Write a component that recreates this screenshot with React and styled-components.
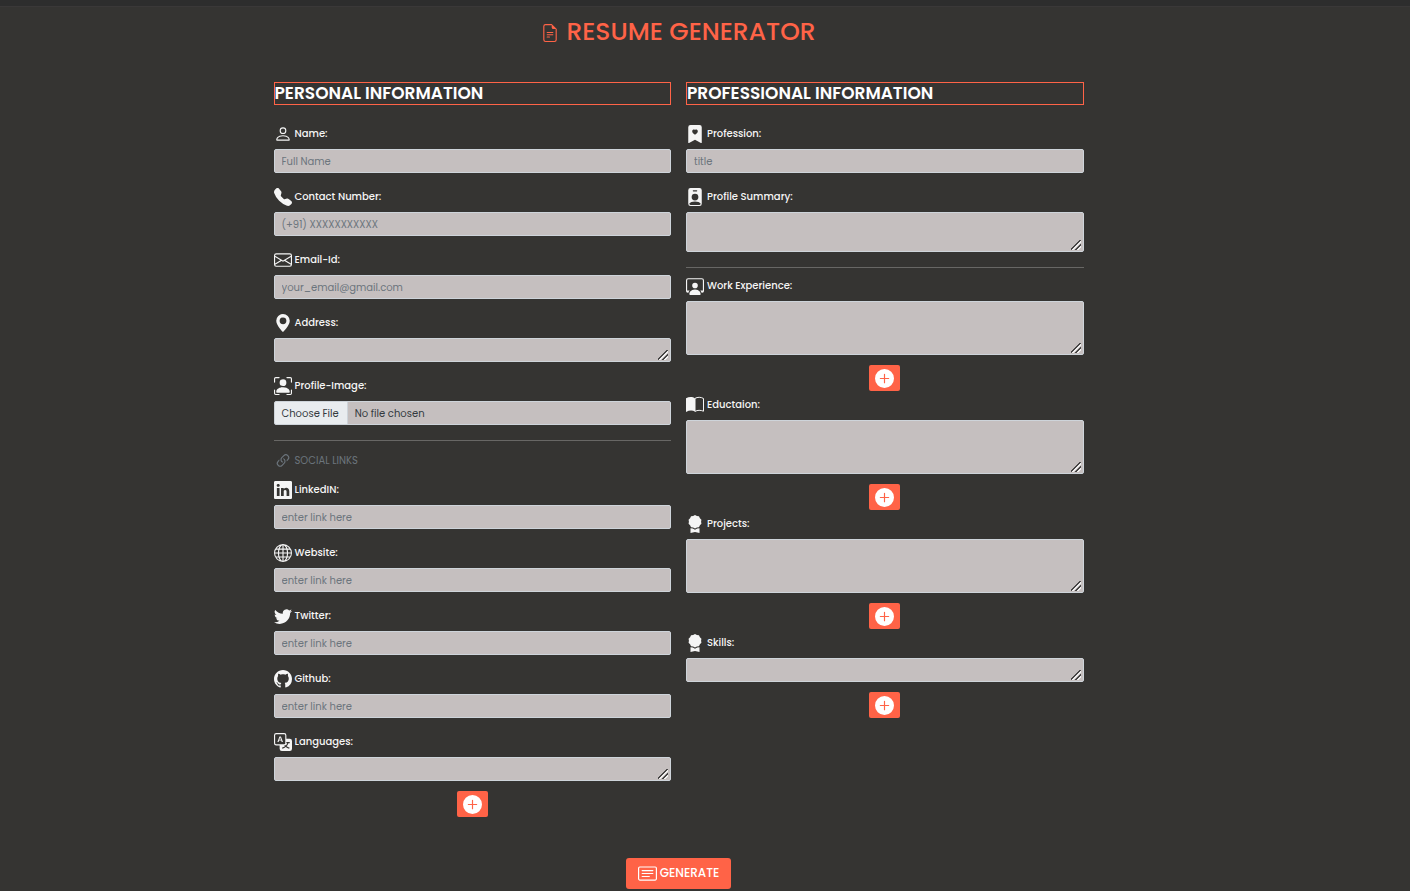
import React, { useId } from "react";
import styled, { createGlobalStyle, css } from "styled-components";
import {
  BsFileEarmarkText, BsPerson, BsTelephoneFill, BsEnvelope, BsGeoAltFill,
  BsPersonBoundingBox, BsLink45Deg, BsLinkedin, BsGlobe, BsTwitter, BsGithub,
  BsTranslate, BsBookmarkHeartFill, BsPersonBadgeFill,
  BsPersonWorkspace, BsAwardFill, BsPlusCircleFill, BsCardText,
} from "react-icons/bs";

const accent = "#ff6347";

const GlobalStyle = createGlobalStyle`
  *, *::before, *::after { box-sizing: border-box; }
  body {
    margin: 0;
    background: #353432;
    color: #f5f5f5;
    font-family: Poppins, Inter, sans-serif;
    font-size: 10px;
  }
`;

const TopBar = styled.div`
  height: 7px;
  background: #2d2d2d;
  border-bottom: 1px solid #3a3838;
`;

const Page = styled.main`
  display: flex;
  flex-direction: column;
  align-items: center;
  padding: 7px 53px 2px 0;
`;

const Title = styled.h1`
  display: flex;
  align-items: center;
  gap: 7px;
  margin: 0 0 32px;
  color: ${accent};
  font-size: 25px;
  font-weight: 500;
  line-height: 36px;
  svg { width: 18px; height: 18px; margin-top: 2px; }
`;

const Form = styled.form`
  width: 100%;
  max-width: 810px;
  display: flex;
  flex-direction: column;
  align-items: center;
  gap: 36px;
`;

const Columns = styled.div`
  width: 100%;
  display: grid;
  grid-template-columns: 1fr 1fr;
  gap: 15px;
`;

const Column = styled.section`
  display: flex;
  flex-direction: column;
`;

const Heading = styled.h2`
  margin: 0 0 20px;
  border: 1px solid ${accent};
  color: #fff;
  font-size: 17px;
  font-weight: 600;
  line-height: 21px;
`;

const Field = styled.div`
  display: flex;
  flex-direction: column;
  margin-bottom: ${(p) => (p.$repeat ? 5 : 15)}px;
`;

const lead = css`
  display: flex;
  align-items: flex-start;
  gap: 3px;
  height: 24px;
  line-height: 18px;
  svg { flex: none; width: 18px; height: 18px; }
`;

const Label = styled.label`
  ${lead}
  font-weight: 500;
`;

const SubHeading = styled.h3`
  ${lead}
  margin: 2px 0 5px;
  color: #6c757d;
  font-size: 10px;
  font-weight: 400;
`;

const control = css`
  display: block;
  width: 100%;
  margin: 0;
  border: 1px solid #ced4da;
  border-radius: 2px;
  background: #c5bfbf;
  color: #343a40;
  font: inherit;
  line-height: 16px;
`;

const TextInput = styled.input`
  ${control}
  height: 24px;
  padding: 4px 7px 2px;
  &::placeholder { color: #6c757d; opacity: 1; }
`;

const FileInput = styled.input`
  ${control}
  height: 24px;
  line-height: 22px;
  &::file-selector-button {
    height: 22px;
    margin: 0 7px 0 0;
    padding: 1px 8px 0 7px;
    border: 0;
    border-right: 1px solid #ced4da;
    background: #e9ecef;
    color: #343a40;
    font: inherit;
  }
`;

const TextArea = styled.textarea`
  ${control}
  height: ${(p) => p.$height}px;
  padding: 3px 7px;
  resize: vertical;

  &::-webkit-resizer {
    background: linear-gradient(
        135deg,
        transparent 42%, #484646 43% 52%, #f2f0f0 53% 60%,
        transparent 61% 69%, #484646 70% 79%, #f2f0f0 80% 87%, transparent 88%
      ) 3px 4px / 10px 10px no-repeat;
  }
`;

const Divider = styled.hr`
  width: 100%;
  height: 1px;
  margin: 0 0 9px;
  border: 0;
  background: #686765;
`;

const AddButton = styled.button`
  align-self: center;
  display: flex;
  align-items: center;
  justify-content: center;
  width: 31px;
  height: 26px;
  margin-top: 10px;
  padding: 0;
  border: 0;
  border-radius: 2px;
  background: ${accent};
  color: #fff;
  svg { width: 19px; height: 19px; }
`;

const GenerateButton = styled.button`
  display: flex;
  align-items: center;
  gap: 3px;
  height: 31px;
  padding: 0 12px 1px;
  border: 0;
  border-radius: 3px;
  background: ${accent};
  color: #fff;
  font: inherit;
  font-size: 12px;
  font-weight: 500;
  svg { width: 19px; height: 19px; }
`;

/* Open book, left page filled */
const BookIcon = () => (
  <svg viewBox="0 0 18 18" aria-hidden="true">
    <path fill="currentColor" d="M0 2.3C3 .7 6.6.7 9 2.4v13.2c-2.5-1.4-5.8-1.4-9 .4z" />
    <path fill="none" stroke="currentColor" d="M9 2.4C11.6.9 14.8.9 17.5 2.5v12.7c-3-1.2-6-1.2-8.5.2z" />
  </svg>
);

function Row({ icon: Icon, label, type = "text", placeholder, height, add }) {
  const id = useId();
  let input;
  if (height) input = <TextArea id={id} $height={height} />;
  else if (type === "file") input = <FileInput id={id} type="file" />;
  else input = <TextInput id={id} type={type} placeholder={placeholder} />;
  return (
    <Field $repeat={add}>
      <Label htmlFor={id}><Icon />{label}</Label>
      {input}
      {add && <AddButton type="button" aria-label={`Add ${add}`}><BsPlusCircleFill /></AddButton>}
    </Field>
  );
}

export default function App() {
  return (
    <>
      <GlobalStyle />
      <TopBar />
      <Page>
        <Title><BsFileEarmarkText />RESUME GENERATOR</Title>
        <Form onSubmit={(e) => e.preventDefault()}>
          <Columns>
            <Column>
              <Heading>PERSONAL INFORMATION</Heading>
              <Row icon={BsPerson} label="Name:" placeholder="Full Name" />
              <Row icon={BsTelephoneFill} label="Contact Number:" type="tel" placeholder="(+91) XXXXXXXXXXX" />
              <Row icon={BsEnvelope} label="Email-Id:" type="email" placeholder="your_email@gmail.com" />
              <Row icon={BsGeoAltFill} label="Address:" height={24} />
              <Row icon={BsPersonBoundingBox} label="Profile-Image:" type="file" />
              <Divider />
              <SubHeading><BsLink45Deg />SOCIAL LINKS</SubHeading>
              <Row icon={BsLinkedin} label="LinkedIN:" type="url" placeholder="enter link here" />
              <Row icon={BsGlobe} label="Website:" type="url" placeholder="enter link here" />
              <Row icon={BsTwitter} label="Twitter:" type="url" placeholder="enter link here" />
              <Row icon={BsGithub} label="Github:" type="url" placeholder="enter link here" />
              <Row icon={BsTranslate} label="Languages:" height={24} add="language" />
            </Column>
            <Column>
              <Heading>PROFESSIONAL INFORMATION</Heading>
              <Row icon={BsBookmarkHeartFill} label="Profession:" placeholder="title" />
              <Row icon={BsPersonBadgeFill} label="Profile Summary:" height={40} />
              <Divider />
              <Row icon={BsPersonWorkspace} label="Work Experience:" height={54} add="work experience" />
              <Row icon={BookIcon} label="Eductaion:" height={54} add="education" />
              <Row icon={BsAwardFill} label="Projects:" height={54} add="project" />
              <Row icon={BsAwardFill} label="Skills:" height={24} add="skill" />
            </Column>
          </Columns>
          <GenerateButton type="submit"><BsCardText />GENERATE</GenerateButton>
        </Form>
      </Page>
    </>
  );
}
